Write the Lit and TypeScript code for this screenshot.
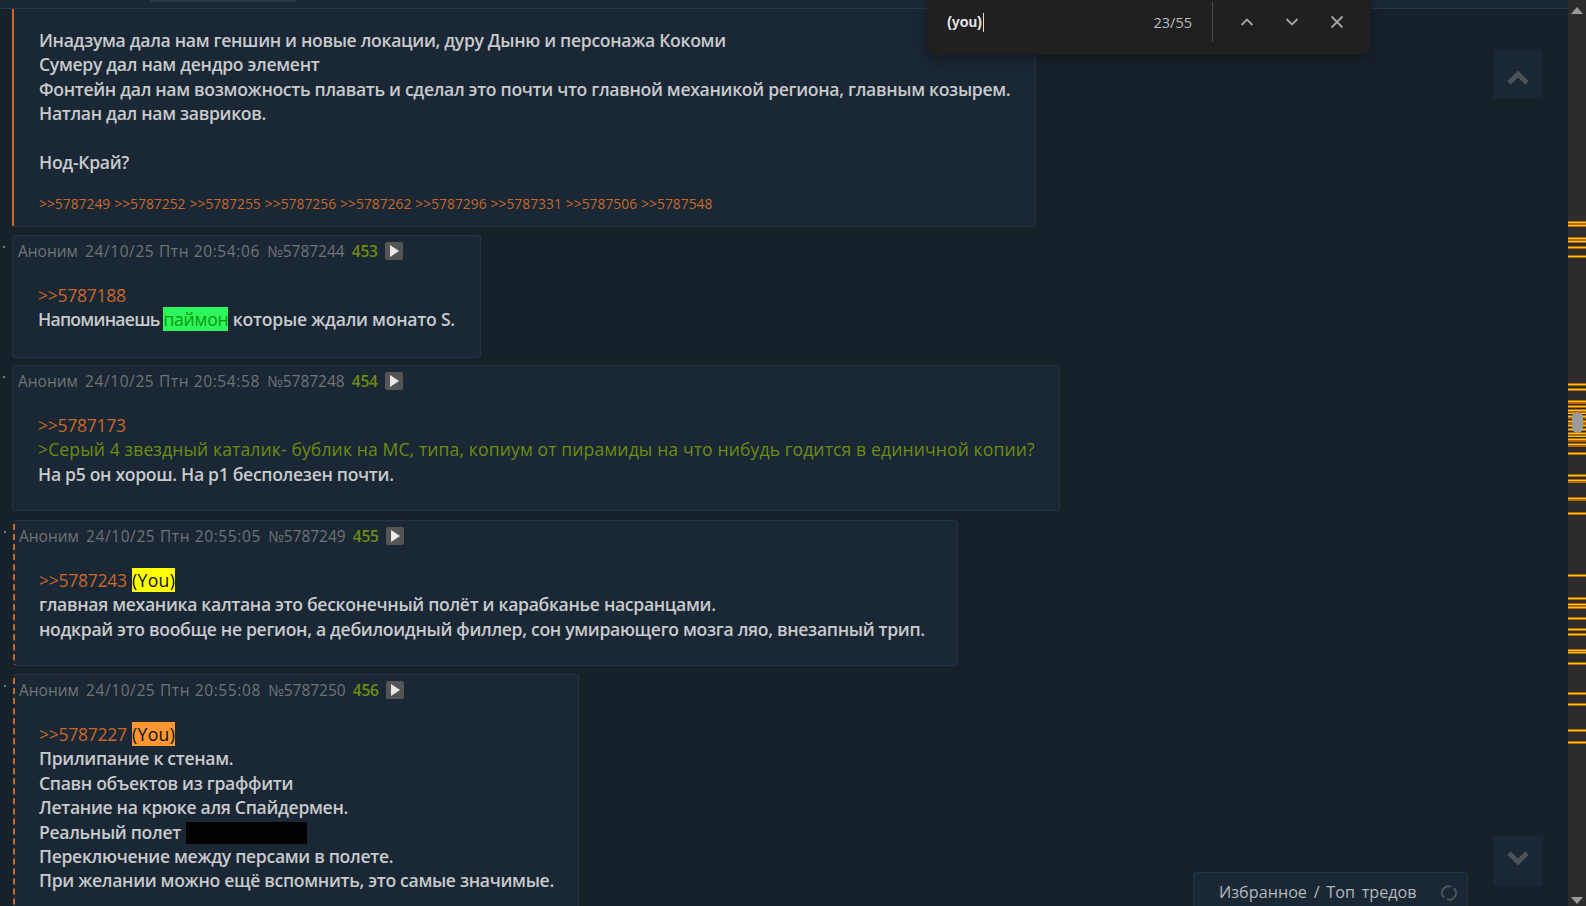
import { LitElement, html, css, svg } from "lit";
import { customElement } from "lit/decorators.js";

const TICKS: [number, number][] = [
  [221,6],[237,6],[246,3],[255,3],[383,3],[388,3],[400,4],[405,3],[409,5],[415,4],[420,4],[424,3],[428,3],[432,5],[438,4],[443,4],[452,3],[474,3],[479,4],[497,4],
  [512,3],[574,3],[597,3],[603,3],[606,3],[617,3],[628,3],[633,3],[649,2],[651,3],[662,3],[692,3],[703,3],[729,3],[741,3],
];

const LINKS = ["5787249","5787252","5787255","5787256","5787262","5787296","5787331","5787506","5787548"];

@customElement("app-root")
export class AppRoot extends LitElement {
  static styles = css`
    :host { display: block; width: 1586px; height: 906px; overflow: hidden; position: relative; background: #17212a; font-family: "Open Sans", sans-serif; }
    .page { display: flex; height: 906px; }
    .main { flex: 1; min-width: 0; overflow: hidden; display: flex; flex-direction: column; }
    .topbar { height: 9px; flex: none; background: #1a2734; border-bottom: 1px solid #2a3848; box-sizing: border-box; position: relative; }
    .tab { position: absolute; left: 150px; top: 0; width: 147px; height: 2px; background: #2a3848; border-radius: 0 0 3px 3px; }
    .list { display: flex; flex-direction: column; align-items: flex-start; padding-left: 12px; }
    .post { box-sizing: border-box; background: #1a2734; border: 1px solid #253445; border-radius: 3px; position: relative; flex: none; }
    .dot { position: absolute; left: -10px; top: 10px; width: 2px; height: 2px; background: #767c82; }
    .mine { border-left: 2px dashed #c8682a; }
    .mine .dot { left: -11px; }
    .op { border-left: 2px solid #c8682a; border-top: none; border-radius: 0 0 3px 3px; }
    .p1 { width: 1024px; height: 218px; margin-bottom: 8px; }
    .p2 { width: 469px; height: 123px; margin-bottom: 7px; }
    .p3 { width: 1048px; height: 146px; margin-bottom: 9px; }
    .p4 { width: 945px; height: 146px; margin-bottom: 8px; margin-left: 1px; }
    .p5 { width: 566px; height: 250px; margin-left: 1px; }
    .meta { display: flex; align-items: center; gap: 7px; height: 23px; padding: 3px 0 0 5px; color: #707477; font-size: 15.5px; white-space: nowrap; }
    .mine .meta { padding-left: 4px; }
    .date { letter-spacing: 0.6px; }
    .num { color: #6d8d12; font-weight: 600; letter-spacing: -0.2px; }
    .play { width: 18px; height: 18px; border-radius: 2px; background: #555; display: flex; align-items: center; justify-content: center; }
    .play svg { display: block; }
    .body { padding: 21px 0 0 25px; color: #c8cacd; font-size: 17.6px; line-height: 24.4px; white-space: nowrap; font-weight: 550; letter-spacing: -0.32px; }
    .op .body { padding-top: 19px; }
    .mine .body { padding-left: 24px; }
    .reflink { color: #c8682a; font-weight: 400; letter-spacing: -0.3px; }
    .refs { color: #c8682a; font-size: 13.85px; line-height: 18px; margin-top: 21px; display: flex; gap: 4px; font-weight: 400; letter-spacing: 0; }
    .quote { color: #6d8d12; font-weight: 400; letter-spacing: 0.1px; }
    .tight { letter-spacing: -0.25px; }
    .tighter { letter-spacing: -0.75px; }
    .hl { color: #0a9a12; background: #2ff55c; font-weight: 400; }
    .y { color: #111; background: #ffff00; font-weight: 400; margin-left: 1px; letter-spacing: 0.3px; }
    .o { color: #111; background: #ff9632; font-weight: 400; margin-left: 1px; letter-spacing: 0.3px; }
    .spoiler { display: inline-block; width: 121px; height: 22px; background: #000; vertical-align: -5px; margin-left: 1px; }
    .rail { width: 18px; flex: none; background: #2c2c2c; position: relative; }
    .tick { position: absolute; left: 0; right: 0; background: repeating-linear-gradient(#b5660a 0 1px, #ffc800 1px 2px, #b5660a 2px 3px); }
    .thumb { position: absolute; left: 4px; top: 412px; width: 11px; height: 21px; border-radius: 6px; background: #9a9a9a; }
    .arrow { position: absolute; left: 3px; width: 0; height: 0; border-left: 6px solid transparent; border-right: 6px solid transparent; }
    .arrow.up { top: 7px; border-bottom: 7px solid #9a9a9a; }
    .arrow.down { bottom: 2px; border-top: 7px solid #9a9a9a; }
    .nav { position: absolute; left: 1493px; width: 50px; height: 50px; background: #1a2734; border-radius: 2px; display: flex; align-items: center; justify-content: center; box-sizing: border-box; }
    .nav.top { top: 49px; padding-top: 6px; }
    .nav.bot { top: 836px; padding-bottom: 4px; }
    .fav { position: absolute; left: 1193px; top: 872px; width: 275px; height: 40px; box-sizing: border-box; background: #1a2734; border: 1px solid #253445; border-radius: 3px; color: #b4b7ba; font-size: 16.2px; font-weight: 500; word-spacing: 2.5px; padding: 8px 0 0 25px; white-space: nowrap; }
    .fav svg { position: absolute; left: 247px; top: 12px; }
    .find { position: absolute; left: 927px; top: 0; width: 443px; height: 55px; background: #202020; border-radius: 0 0 9px 9px; box-shadow: 0 4px 14px rgba(0,0,0,.35); display: flex; align-items: center; box-sizing: border-box; padding: 0 0 11px 20px; }
    .q { flex: 1; color: #e6e6e6; font: 700 14.3px "Liberation Sans", sans-serif; display: flex; align-items: center; }
    .caret { width: 1px; height: 19px; background: #ddd; margin-left: 1px; }
    .count { color: #b9bec3; font: 14.5px "Open Sans", sans-serif; margin-right: 20px; }
    .sep { width: 1px; height: 40px; background: #4a4a4a; margin-right: 23px; }
    .btn { width: 22px; height: 22px; display: flex; align-items: center; justify-content: center; margin-right: 23px; }
    .btn:last-child { margin-right: 22px; }
  `;

  private play() {
    return html`<span class="play"><svg width="10" height="12" viewBox="0 0 10 12"><path d="M1 0 L10 6 L1 12Z" fill="#e8e8e8"/></svg></span>`;
  }

  private meta(t: string, no: string, n: string) {
    return html`<div class="meta"><span>Аноним</span><span class="date">${t}</span><span>№${no}</span><span class="num">${n}</span>${this.play()}</div>`;
  }

  render() {
    return html`
      <div class="page">
        <div class="main">
          <div class="topbar"><div class="tab"></div></div>
          <div class="list">
            <div class="post op p1">
              <div class="body">
                Инадзума дала нам геншин и новые локации, дуру Дыню и персонажа Кокоми<br>
                Сумеру дал нам дендро элемент<br>
                Фонтейн дал нам возможность плавать и сделал это почти что главной механикой региона, главным козырем.<br>
                Натлан дал нам завриков.<br><br>
                Нод-Край?
                <div class="refs">${LINKS.map((l) => html`<span>&gt;&gt;${l}</span>`)}</div>
              </div>
            </div>
            <div class="post p2"><span class="dot"></span>
              ${this.meta("24/10/25 Птн 20:54:06", "5787244", "453")}
              <div class="body"><span class="reflink">&gt;&gt;5787188</span><br><span class="tight"><span class="tighter">Напоминаешь </span><span class="hl">паймон</span> которые ждали монато S.</span></div>
            </div>
            <div class="post p3"><span class="dot"></span>
              ${this.meta("24/10/25 Птн 20:54:58", "5787248", "454")}
              <div class="body"><span class="reflink">&gt;&gt;5787173</span><br><span class="quote">&gt;Серый 4 звездный каталик- бублик на МС, типа, копиум от пирамиды на что нибудь годится в единичной копии?</span><br>На р5 он хорош. На р1 бесполезен почти.</div>
            </div>
            <div class="post mine p4"><span class="dot"></span>
              ${this.meta("24/10/25 Птн 20:55:05", "5787249", "455")}
              <div class="body"><span class="reflink">&gt;&gt;5787243</span> <span class="y">(You)</span><br>главная механика калтана это бесконечный полёт и карабканье насранцами.<br>нодкрай это вообще не регион, а дебилоидный филлер, сон умирающего мозга ляо, внезапный трип.</div>
            </div>
            <div class="post mine p5"><span class="dot"></span>
              ${this.meta("24/10/25 Птн 20:55:08", "5787250", "456")}
              <div class="body"><span class="reflink">&gt;&gt;5787227</span> <span class="o">(You)</span><br>Прилипание к стенам.<br>Спавн объектов из граффити<br>Летание на крюке аля Спайдермен.<br>Реальный полет <span class="spoiler"></span><br>Переключение между персами в полете.<br>При желании можно ещё вспомнить, это самые значимые.</div>
            </div>
          </div>
        </div>
        <div class="rail">
          <span class="arrow up"></span>
          ${TICKS.map(([t, h]) => html`<span class="tick" style="top:${t}px;height:${h}px"></span>`)}
          <span class="thumb"></span>
          <span class="arrow down"></span>
        </div>
      </div>
      <div class="nav top"><svg width="24" height="16" viewBox="0 0 24 16"><path d="M3 14 L12 5 L21 14" fill="none" stroke="#4c5257" stroke-width="5"/></svg></div>
      <div class="nav bot"><svg width="24" height="16" viewBox="0 0 24 16"><path d="M3 2 L12 11 L21 2" fill="none" stroke="#4c5257" stroke-width="5"/></svg></div>
      <div class="fav">Избранное / Топ тредов
        <svg width="16" height="16" viewBox="0 0 16 16">${svg`<path d="M3 12.5 A6.5 6.5 0 0 1 10 1.8" fill="none" stroke="#4f555a" stroke-width="2"/><path d="M13 3.5 A6.5 6.5 0 0 1 6 14.2" fill="none" stroke="#4f555a" stroke-width="2"/>`}</svg>
      </div>
      <div class="find">
        <div class="q">(you)<span class="caret"></span></div>
        <span class="count">23/55</span>
        <span class="sep"></span>
        <span class="btn"><svg width="14" height="10" viewBox="0 0 14 10"><path d="M1.5 8 L7 2.5 L12.5 8" fill="none" stroke="#a5a5a5" stroke-width="1.8"/></svg></span>
        <span class="btn"><svg width="14" height="10" viewBox="0 0 14 10"><path d="M1.5 2 L7 7.5 L12.5 2" fill="none" stroke="#a5a5a5" stroke-width="1.8"/></svg></span>
        <span class="btn"><svg width="14" height="14" viewBox="0 0 14 14"><path d="M1.5 1.5 L12.5 12.5 M12.5 1.5 L1.5 12.5" fill="none" stroke="#a5a5a5" stroke-width="1.8"/></svg></span>
      </div>
    `;
  }
}
